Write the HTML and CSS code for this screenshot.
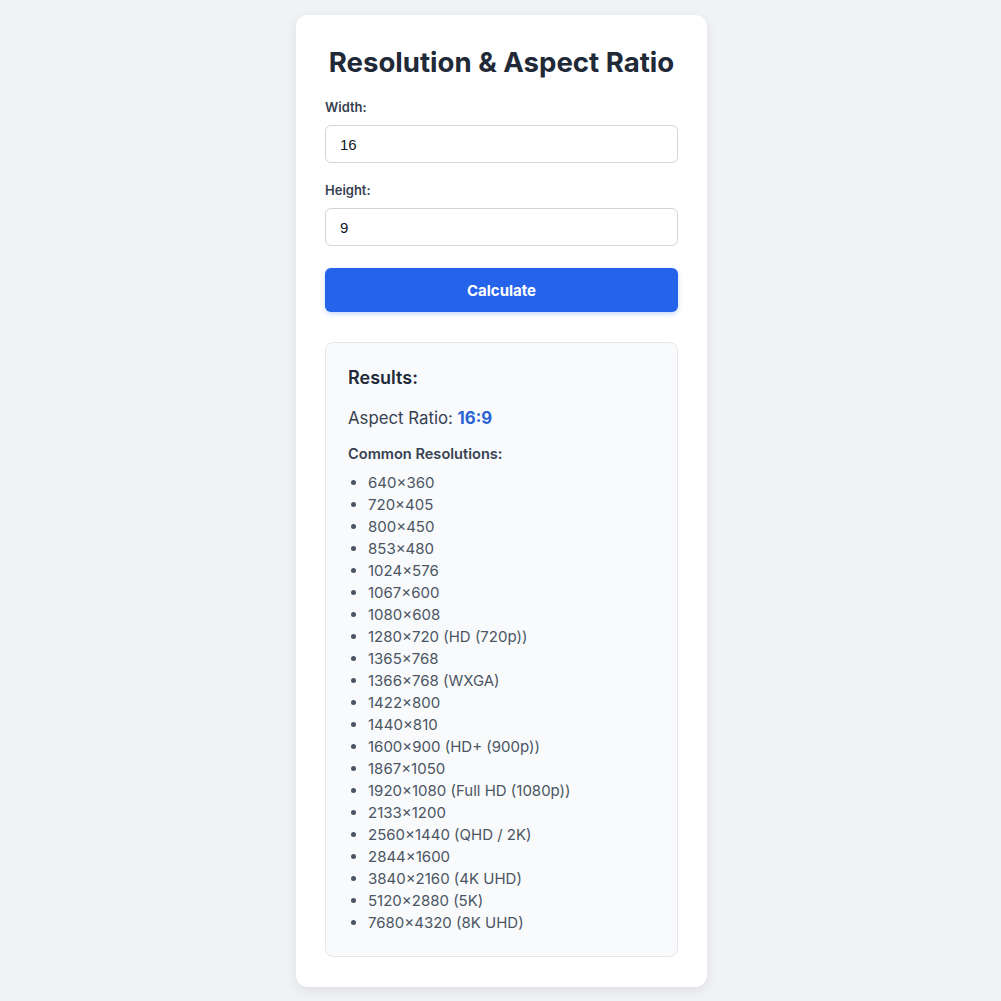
FILE: index.html
```html
<!DOCTYPE html>
<html lang="en">
<head>
    <meta charset="UTF-8">
    <meta name="viewport" content="width=device-width, initial-scale=1.0">
    <title>Resolution &amp; Aspect Ratio</title>
    <link rel="stylesheet" href="styles.css">
</head>
<body>
    <div class="container">
        <h1>Resolution &amp; Aspect Ratio</h1>

        <div class="field">
            <label for="width">Width:</label>
            <input type="number" id="width" value="16">
        </div>

        <div class="field">
            <label for="height">Height:</label>
            <input type="number" id="height" value="9">
        </div>

        <button id="calculate">Calculate</button>

        <div class="results">
            <h2>Results:</h2>
            <p class="ratio">Aspect Ratio: <strong>16:9</strong></p>
            <h3>Common Resolutions:</h3>
            <ul class="res-list">
                <li>640×360</li>
                <li>720×405</li>
                <li>800×450</li>
                <li>853×480</li>
                <li>1024×576</li>
                <li>1067×600</li>
                <li>1080×608</li>
                <li>1280×720 (HD (720p))</li>
                <li>1365×768</li>
                <li>1366×768 (WXGA)</li>
                <li>1422×800</li>
                <li>1440×810</li>
                <li>1600×900 (HD+ (900p))</li>
                <li>1867×1050</li>
                <li>1920×1080 (Full HD (1080p))</li>
                <li>2133×1200</li>
                <li>2560×1440 (QHD / 2K)</li>
                <li>2844×1600</li>
                <li>3840×2160 (4K UHD)</li>
                <li>5120×2880 (5K)</li>
                <li>7680×4320 (8K UHD)</li>
            </ul>
        </div>
    </div>
</body>
</html>
```

FILE: styles.css
```css
* {
    box-sizing: border-box;
}
body {
    margin: 0;
    padding: 15px 0 14px 2px;
    background-color: #f0f2f5;
    font-family: Inter, "Noto Sans", sans-serif;
    color: #1f2937;
}
.container {
    width: 411px;
    margin: 0 auto;
    background-color: #ffffff;
    border-radius: 12px;
    padding: 30px 29px 30px;
    box-shadow: 0 4px 12px rgba(0, 0, 0, 0.08);
}
h1 {
    margin: 0 0 20px;
    font-size: 27.6px;
    line-height: 34px;
    font-weight: 700;
    text-align: center;
    color: #1f2937;
}
.field {
    margin-bottom: 19px;
}
.field label {
    display: block;
    font-size: 13px;
    line-height: 16px;
    font-weight: 600;
    color: #374151;
    margin-bottom: 10px;
}
.field input {
    display: block;
    width: 100%;
    height: 38px;
    padding: 0 14px;
    border: 1px solid #d1d5db;
    border-radius: 6px;
    font-family: "Liberation Sans", Arial, sans-serif;
    font-size: 15px;
    color: #111827;
    background-color: #ffffff;
    -moz-appearance: textfield;
}
.field input::-webkit-inner-spin-button,
.field input::-webkit-outer-spin-button {
    -webkit-appearance: none;
    margin: 0;
}
button {
    display: block;
    width: 100%;
    height: 44px;
    margin-top: 22px;
    border: none;
    border-radius: 6px;
    background-color: #2563eb;
    color: #ffffff;
    font-family: Inter, sans-serif;
    font-size: 15px;
    font-weight: 700;
    cursor: pointer;
    box-shadow: 0 2px 5px rgba(37, 99, 235, 0.25);
}
.results {
    margin-top: 30px;
    padding: 23px 22px 22px;
    background-color: #f8fafc;
    border: 1px solid #e5e7eb;
    border-radius: 8px;
}
.results h2 {
    margin: 0 0 16px;
    font-size: 18px;
    line-height: 24px;
    font-weight: 600;
    color: #1f2937;
}
.ratio {
    margin: 0 0 14px;
    font-size: 16.8px;
    line-height: 24px;
    color: #374151;
}
.ratio strong {
    color: #2b62d4;
    font-weight: 700;
}
.results h3 {
    margin: 0 0 8px;
    font-size: 14.6px;
    line-height: 20px;
    font-weight: 600;
    color: #374151;
}
.res-list {
    margin: 0;
    padding-left: 20px;
    font-size: 15px;
    line-height: 22px;
    color: #4b5563;
}
```
